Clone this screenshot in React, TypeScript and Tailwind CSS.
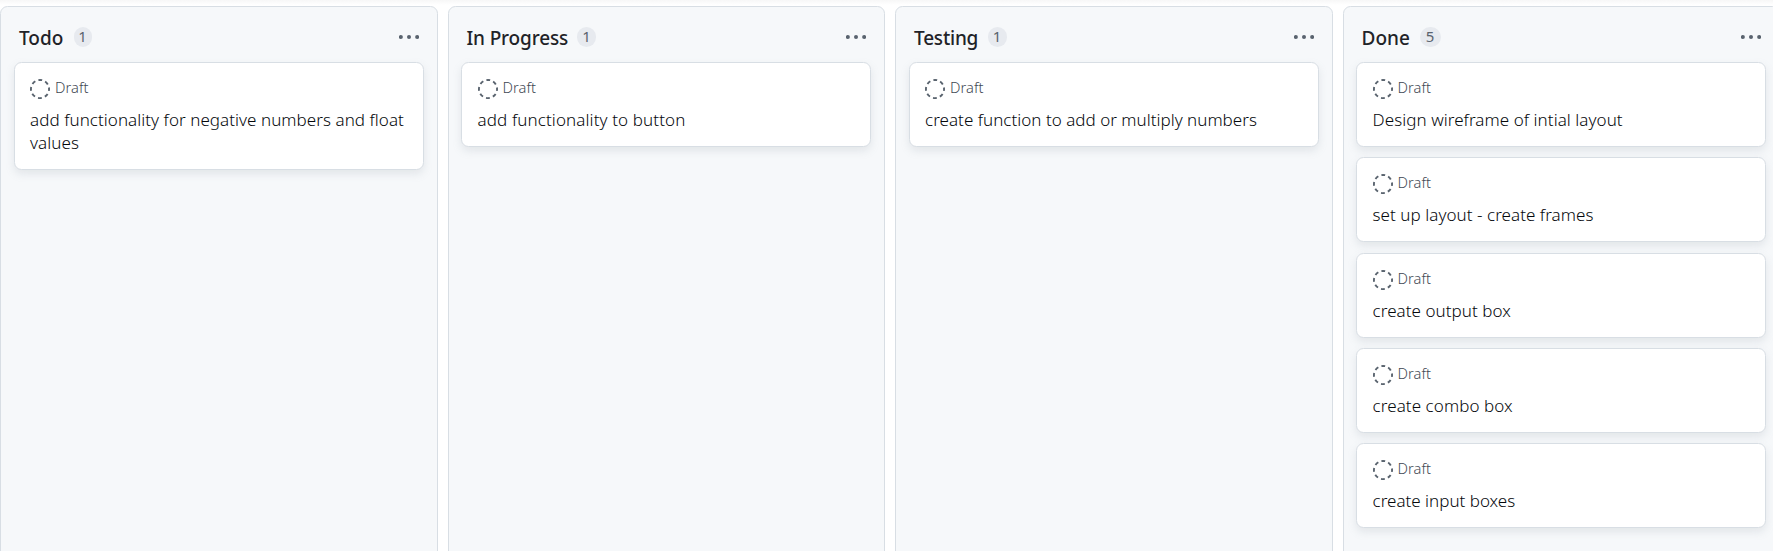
type Card = { title: string; spacing: string };
type Column = { name: string; nameClass: string; badgeClass: string; cards: Card[] };

const columns: Column[] = [
  {
    name: "Todo",
    nameClass: "w-[45px]",
    badgeClass: "w-[18px]",
    cards: [{ title: "add functionality for negative numbers and float values", spacing: "tracking-[0.05px]" }],
  },
  {
    name: "In Progress",
    nameClass: "w-[101px] tracking-[-0.15px]",
    badgeClass: "w-[19px]",
    cards: [{ title: "add functionality to button", spacing: "tracking-[0.11px]" }],
  },
  {
    name: "Testing",
    nameClass: "w-[64px] tracking-[-0.2px]",
    badgeClass: "w-[19px]",
    cards: [{ title: "create function to add or multiply numbers", spacing: "tracking-[0.02px]" }],
  },
  {
    name: "Done",
    nameClass: "w-[48.5px]",
    badgeClass: "w-[21px]",
    cards: [
      { title: "Design wireframe of intial layout", spacing: "tracking-[0.06px]" },
      { title: "set up layout - create frames", spacing: "tracking-[0.05px]" },
      { title: "create output box", spacing: "tracking-[0.05px]" },
      { title: "create combo box", spacing: "tracking-[0.07px]" },
      { title: "create input boxes", spacing: "tracking-[0px]" },
    ],
  },
];

function DraftIcon() {
  return (
    <svg viewBox="0 0 16 16" className="h-5 w-5 shrink-0" fill="none" stroke="#59636e" strokeWidth="1.5">
      <circle cx="8" cy="8" r="7.25" strokeDasharray="3.1 2.594" strokeDashoffset="1.55" />
    </svg>
  );
}

function KebabIcon() {
  return (
    <svg viewBox="0 0 16 16" className="h-5 w-5" fill="#59636e">
      <circle cx="1.5" cy="8" r="1.6" />
      <circle cx="8" cy="8" r="1.6" />
      <circle cx="14.5" cy="8" r="1.6" />
    </svg>
  );
}

function CardView({ card }: { card: Card }) {
  return (
    <article className="rounded-[7.5px] border border-[#d8dee4] bg-white pt-[15px] pr-[14px] pb-[15.1px] pl-[15.5px] shadow-[0_4px_8px_rgba(140,149,159,0.18)]">
      <div className="flex h-[22px] items-center">
        <DraftIcon />
        <span className="mb-[3.6px] ml-[5px] text-[14.7px] leading-[20px] font-light text-[#3f4954]">Draft</span>
      </div>
      <h3 className={`mt-[8px] w-[380px] text-[17px] leading-[23px] font-light text-[#05080c] ${card.spacing}`}>{card.title}</h3>
    </article>
  );
}

function ColumnView({ column }: { column: Column }) {
  return (
    <section className="h-[560px] w-[437.5px] shrink-0 rounded-[7.5px] border border-[#d8dee4] bg-[#f6f8fa]">
      <header className="flex h-[55px] items-center pt-[6px] pr-[18px] pl-[18px]">
        <h2 className={`whitespace-nowrap text-[19px] leading-[26px] font-medium text-[#1f2328] ${column.nameClass}`}>{column.name}</h2>
        <span className={`mb-[2px] ml-[9.5px] flex h-5 items-center justify-center rounded-full bg-[#e7eaef] text-[15px] leading-none text-[#59636e] ${column.badgeClass}`}>
          {column.cards.length}
        </span>
        <span className="mb-[2px] ml-auto">
          <KebabIcon />
        </span>
      </header>
      <div className="flex flex-col gap-[10.2px] pr-[13px] pl-[12.6px]">
        {column.cards.map((card) => (
          <CardView key={card.title} card={card} />
        ))}
      </div>
    </section>
  );
}

export default function App() {
  return (
    <main className="h-[551px] w-[1773px] overflow-hidden bg-white bg-[linear-gradient(to_bottom,#f7f7f7_0px,#ffffff_5px)] font-['Noto_Sans',sans-serif]">
      <div className="flex gap-[10px] pt-[6px]">
        {columns.map((column) => (
          <ColumnView key={column.name} column={column} />
        ))}
      </div>
    </main>
  );
}
